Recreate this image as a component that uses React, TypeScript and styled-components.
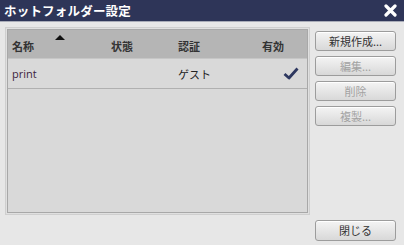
import React from "react";
import styled, { createGlobalStyle } from "styled-components";

const Global = createGlobalStyle`
  html, body { margin: 0; padding: 0; background: #e7e7e7; }
  body { font-family: "Noto Sans CJK JP", "Noto Sans", sans-serif; }
`;

const Window = styled.div`
  width: 404px;
  height: 245px;
  display: flex;
  flex-direction: column;
  background: #e7e7e7;
  overflow: hidden;
`;

const TitleBar = styled.div`
  height: 21px;
  background: #2e3558;
  border-bottom: 1px solid #a9acb8;
  display: flex;
  align-items: center;
  justify-content: space-between;
  padding: 0 7px 0 4px;
`;

const Title = styled.div`
  color: #ffffff;
  font-weight: 700;
  font-size: 12.5px;
  letter-spacing: 0.2px;
`;

const Body = styled.div`
  flex: 1;
  display: flex;
  flex-direction: column;
  padding: 5px 8px 4px 5px;
`;

const Main = styled.div`
  display: flex;
  gap: 5px;
`;

const ListFrame = styled.div`
  width: 303px;
  height: 184px;
  border: 1px solid #cfcfcf;
  padding: 1px;
  background: #e0e0e0;
`;

const ListInner = styled.div`
  height: 100%;
  box-sizing: border-box;
  border: 1px solid #a8a8a8;
  background: #d9d9d9;
`;

const Grid = styled.div`
  display: grid;
  grid-template-columns: 99px 67px 84px 1fr;
`;

const HeaderRow = styled(Grid)`
  height: 28px;
  background: #b5b5b5;
  border-bottom: 1px solid #c6c6c6;
`;

const HeaderCell = styled.div`
  position: relative;
  font-size: 11px;
  font-weight: 700;
  color: #333333;
  padding: 8px 0 0 4px;
`;

const SortArrow = styled.span`
  position: absolute;
  left: 47px;
  top: 5px;
  width: 0;
  height: 0;
  border-left: 5px solid transparent;
  border-right: 5px solid transparent;
  border-bottom: 5px solid #111;
`;

const DataRow = styled(Grid)`
  height: 29px;
  border-bottom: 1px solid #b0b0b0;
  align-items: center;
`;

const Cell = styled.div<{ $color?: string }>`
  font-size: 11px;
  color: ${(p) => p.$color || "#222"};
  padding-left: 4px;
  font-family: ${(p) => (p.$color ? '"Open Sans", "Noto Sans", sans-serif' : '"Noto Sans CJK JP", sans-serif')};
`;

const CheckCell = styled.div`
  padding-left: 25px;
  display: flex;
  align-items: center;
`;

const Buttons = styled.div`
  display: flex;
  flex-direction: column;
  gap: 5px;
  padding-top: 4px;
`;

const Button = styled.button<{ $disabled?: boolean; $tall?: boolean }>`
  width: 81px;
  height: ${(p) => (p.$tall ? "21px" : "20px")};
  border: 1px solid #9c9c9c;
  border-radius: 3px;
  background: linear-gradient(#f4f4f4, #d8d8d8);
  box-shadow: inset 0 1px 0 #ffffff;
  font-family: "Noto Sans CJK JP", sans-serif;
  font-size: 11px;
  color: ${(p) => (p.$disabled ? "#a2a2a2" : "#333")};
  padding: 0;
  line-height: 1;
  display: flex;
  align-items: center;
  justify-content: center;
`;

const Footer = styled.div`
  display: flex;
  justify-content: flex-end;
  margin-top: auto;
`;

export default function App() {
  return (
    <Window>
      <Global />
      <TitleBar>
        <Title>ホットフォルダー設定</Title>
        <svg width="13" height="13" viewBox="0 0 13 13">
          <path d="M2 2 L11 11 M11 2 L2 11" stroke="#fff" strokeWidth="3.2" strokeLinecap="round" />
        </svg>
      </TitleBar>
      <Body>
        <Main>
          <ListFrame>
            <ListInner>
              <HeaderRow>
                <HeaderCell>
                  名称
                  <SortArrow />
                </HeaderCell>
                <HeaderCell>状態</HeaderCell>
                <HeaderCell>認証</HeaderCell>
                <HeaderCell>有効</HeaderCell>
              </HeaderRow>
              <DataRow>
                <Cell $color="#3d2440">print</Cell>
                <Cell></Cell>
                <Cell>ゲスト</Cell>
                <CheckCell>
                  <svg width="16" height="13" viewBox="0 0 16 13">
                    <path d="M1.5 7 L6 11 L14.5 1.5" stroke="#2e3860" strokeWidth="2.8" fill="none" strokeLinejoin="round" />
                  </svg>
                </CheckCell>
              </DataRow>
            </ListInner>
          </ListFrame>
          <Buttons>
            <Button>新規作成...</Button>
            <Button $disabled>編集...</Button>
            <Button $disabled>削除</Button>
            <Button $disabled>複製...</Button>
          </Buttons>
        </Main>
        <Footer>
          <Button $tall>閉じる</Button>
        </Footer>
      </Body>
    </Window>
  );
}
